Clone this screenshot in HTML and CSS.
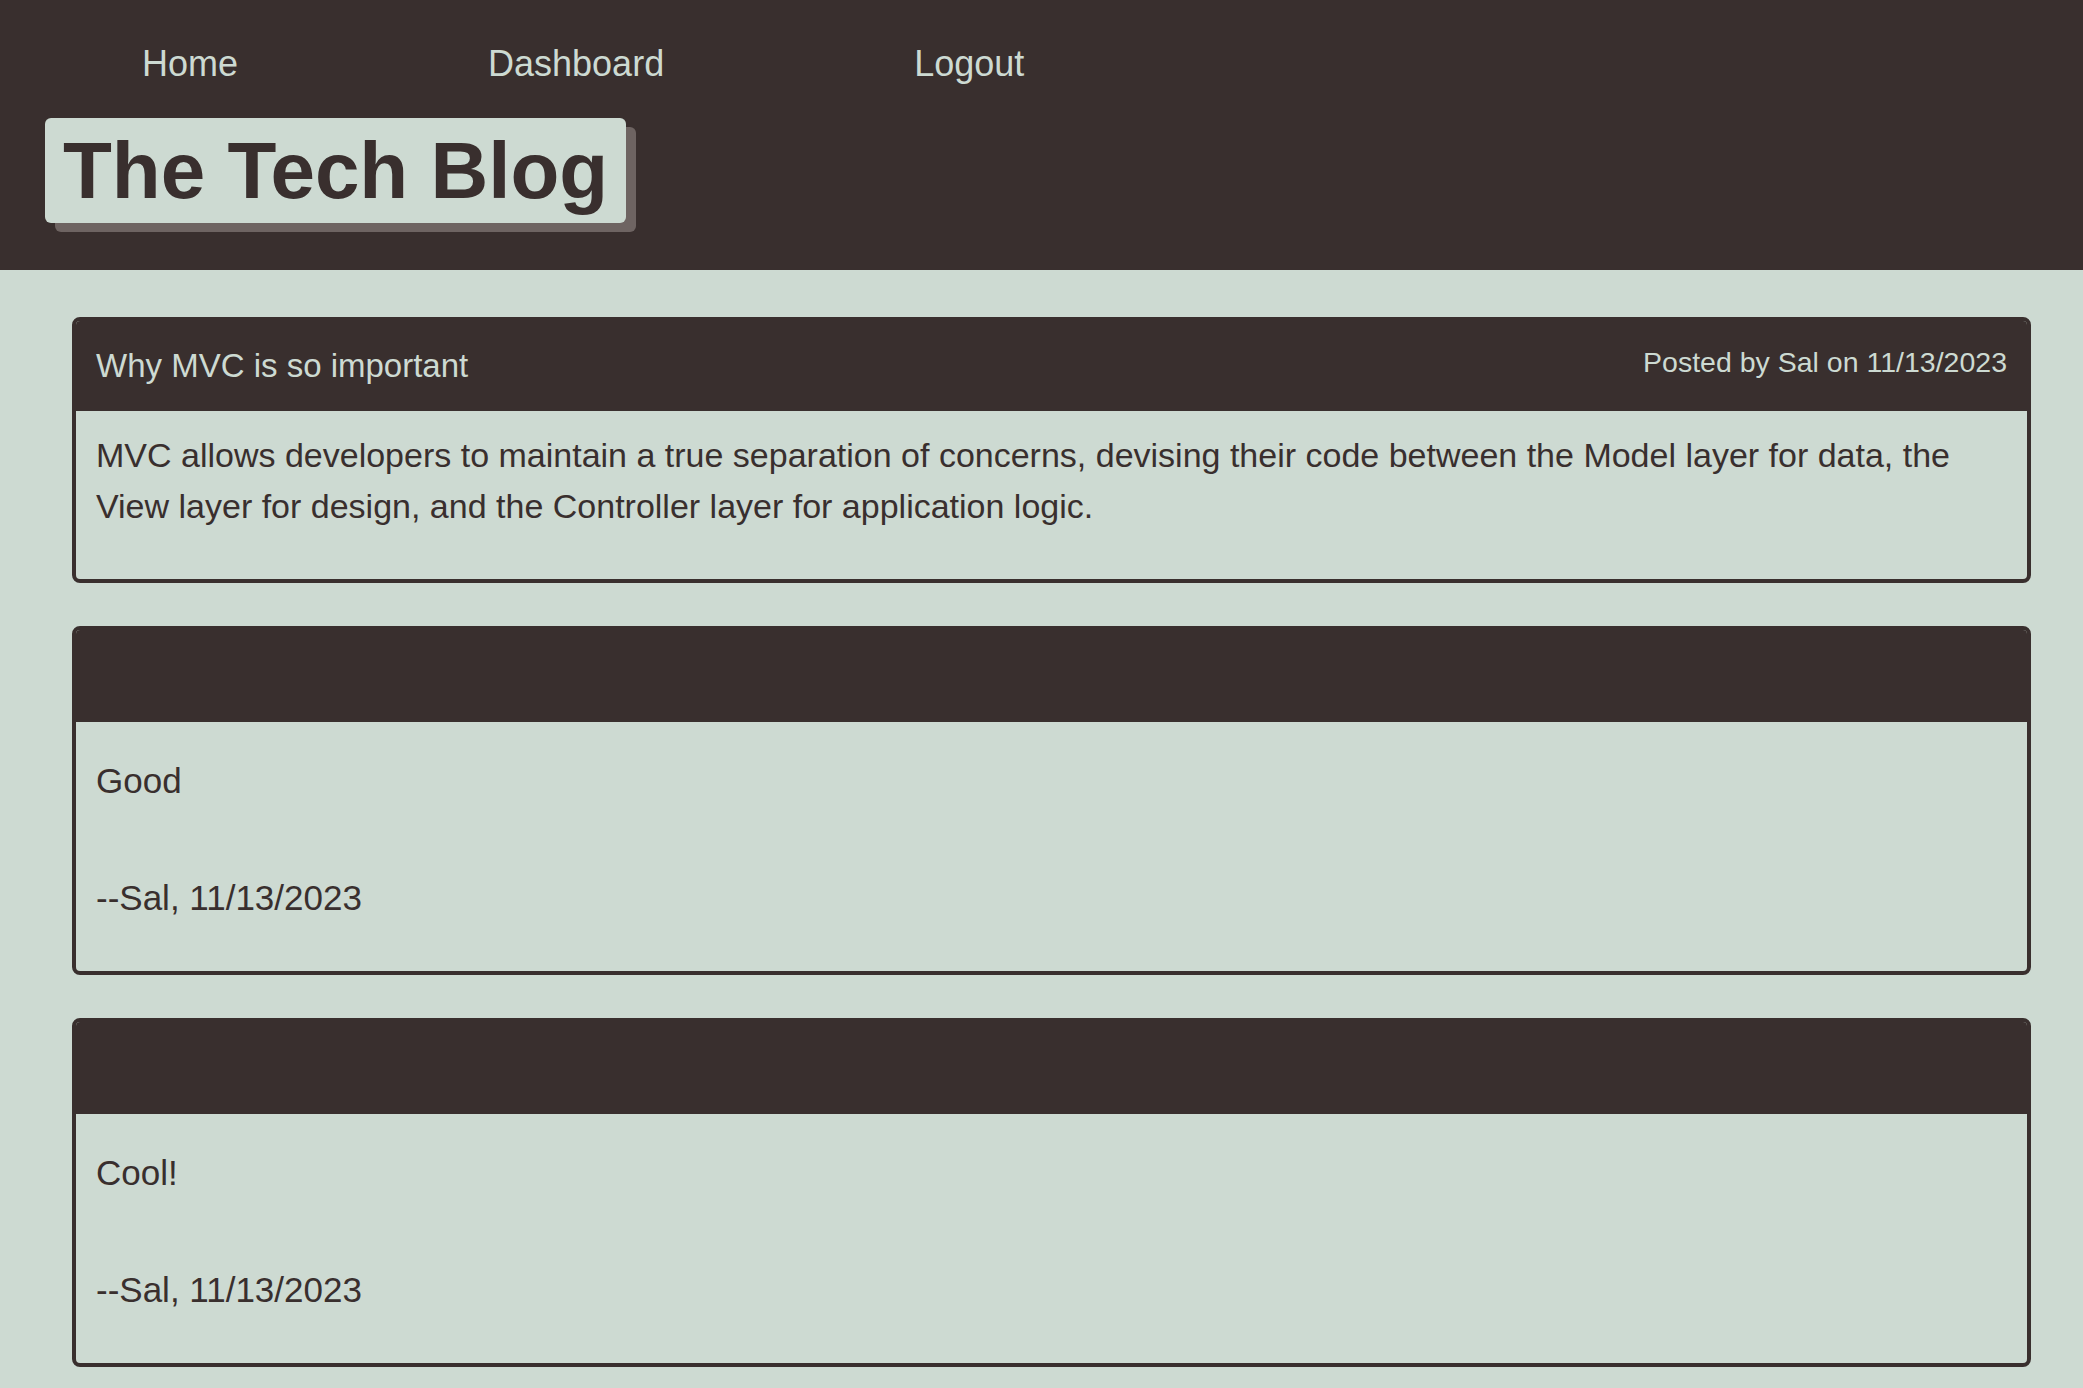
FILE: index.html
```html
<!DOCTYPE html>
<html lang="en">
<head>
<meta charset="utf-8">
<title>The Tech Blog</title>
<link rel="stylesheet" href="styles.css">
</head>
<body>
<header class="site-header">
  <nav class="nav">
    <a class="nav-link" href="#">Home</a>
    <a class="nav-link" href="#">Dashboard</a>
    <a class="nav-link" href="#">Logout</a>
  </nav>
  <h1 class="brand">The Tech Blog</h1>
</header>
<main class="main">
  <article class="card">
    <div class="card-header">
      <h2 class="post-title">Why MVC is so important</h2>
      <span class="post-meta">Posted by Sal on 11/13/2023</span>
    </div>
    <div class="card-body">
      <p class="post-text">MVC allows developers to maintain a true separation of concerns, devising their code between the Model layer for data, the View layer for design, and the Controller layer for application logic.</p>
    </div>
  </article>
  <article class="card">
    <div class="card-header comment-header"></div>
    <div class="card-body comment-body">
      <p class="comment-text">Good</p>
      <p class="comment-author">--Sal, 11/13/2023</p>
    </div>
  </article>
  <article class="card">
    <div class="card-header comment-header"></div>
    <div class="card-body comment-body">
      <p class="comment-text">Cool!</p>
      <p class="comment-author">--Sal, 11/13/2023</p>
    </div>
  </article>
</main>
</body>
</html>
```
FILE: styles.css
```css
html, body {
  margin: 0;
  padding: 0;
}
body {
  background: #cddad2;
  color: #392f2e;
  font-family: "Liberation Sans", Arial, sans-serif;
}
.site-header {
  background: #392f2e;
  padding: 42px 0 47px 45px;
}
.nav {
  display: flex;
  gap: 250px;
  padding-left: 97px;
  line-height: 43px;
}
.nav-link {
  color: #cddad2;
  text-decoration: none;
  font-size: 36px;
}
.brand {
  width: fit-content;
  margin: 33px 0 0 0;
  padding: 0 18px;
  background: #cddad2;
  color: #392f2e;
  font-size: 80px;
  font-weight: 700;
  line-height: 105px;
  border-radius: 6px;
  box-shadow: 10px 9px 0 #6e6462;
}
.main {
  display: flex;
  flex-direction: column;
  gap: 43px;
  padding: 47px 52px 22px 72px;
}
.card {
  border: 4px solid #392f2e;
  border-radius: 8px;
  overflow: hidden;
}
.card-header {
  background: #392f2e;
  color: #cddad2;
  display: flex;
  justify-content: space-between;
  align-items: flex-start;
  padding: 20px 20px;
}
.post-title {
  margin: 0;
  font-size: 33px;
  font-weight: 400;
  line-height: 50px;
}
.post-meta {
  font-size: 28.5px;
  line-height: 42px;
}
.card-body {
  padding: 19px 20px 47px;
}
.post-text {
  margin: 0;
  font-size: 34px;
  line-height: 51px;
}
.comment-header {
  height: 92px;
  padding: 0;
}
.comment-body {
  padding: 33px 20px 47px;
}
.comment-text,
.comment-author {
  font-size: 35px;
  line-height: 52px;
}
.comment-text {
  margin: 0 0 65px;
}
.comment-author {
  margin: 0;
}
```
